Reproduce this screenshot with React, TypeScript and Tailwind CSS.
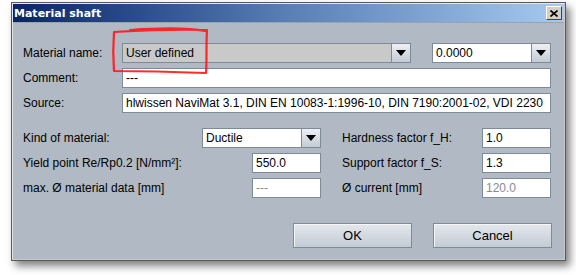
import React from "react";

const font = { fontFamily: '"Liberation Sans", Arial, sans-serif' };

function Arrow() {
  return (
    <div className="flex h-full w-[19px] shrink-0 items-center justify-center border-l border-[#7d8b99] bg-gradient-to-b from-[#eef0f3] to-[#c4cbd4]">
      <svg width="10" height="6" viewBox="0 0 10 6">
        <path d="M0 0 H10 L5 6 Z" fill="#000" />
      </svg>
    </div>
  );
}

function Combo({ value, className, grey }: { value: string; className: string; grey?: boolean }) {
  return (
    <div className={`flex h-[20px] border border-[#7d8b99] ${grey ? "bg-[#c9c9c9]" : "bg-white"} ${className}`}>
      <div className="flex-1 truncate pl-[3px] text-[12px] leading-[18px] text-black">{value}</div>
      <Arrow />
    </div>
  );
}

function Field({ value, className, dim }: { value: string; className: string; dim?: boolean }) {
  return (
    <div
      className={`h-[20px] overflow-hidden whitespace-nowrap border border-[#7d8b99] bg-white pl-[3px] text-[12px] leading-[18px] ${dim ? "text-[#8a8a8a]" : "text-black"} ${className}`}
    >
      {value}
    </div>
  );
}

function Label({ children, className = "" }: { children: React.ReactNode; className?: string }) {
  return <div className={`text-[12px] leading-[20px] text-black ${className}`}>{children}</div>;
}

export default function App() {
  return (
    <div className="relative h-[275px] w-[576px] overflow-hidden bg-white pl-[11px] pt-[2px]" style={font}>
      {/* window */}
      <div className="flex h-[259px] w-[555px] flex-col border border-[#5a5a5a] shadow-[4px_5px_8px_rgba(0,0,0,0.5)]">
        <div className="flex h-full flex-col border border-[#e4e4e4] border-b-[#c8c8c8] border-r-[#c8c8c8] bg-[#b1bac4]">
          {/* title bar */}
          <div className="flex h-[18px] items-center justify-between bg-gradient-to-r from-[#0a246a] via-[#5a7fb5] to-[#a6caf0] pl-[1px] pr-[2px]">
            <span
              className="text-[11px] font-bold leading-none text-white"
              style={{ fontFamily: '"DejaVu Sans", Verdana, sans-serif' }}
            >
              Material shaft
            </span>
            <div className="flex h-[14px] w-[16px] items-center justify-center border border-b-[#404040] border-l-white border-r-[#404040] border-t-white bg-[#d4d0c8]">
              <svg width="8" height="7" viewBox="0 0 8 7">
                <path d="M0.5 0.5 L7.5 6.5 M7.5 0.5 L0.5 6.5" stroke="#000" strokeWidth="1.6" />
              </svg>
            </div>
          </div>

          {/* body */}
          <div className="flex flex-1 flex-col border-t border-[#9aa4ae] pl-[10px] pr-[12px] pt-[20px]">
            <div className="flex flex-col gap-[5px]">
              <div className="flex items-center">
                <Label className="w-[99px]">Material name:</Label>
                <Combo value="User defined" grey className="w-[289px]" />
                <Combo value="0.0000" className="ml-[21px] w-[119px]" />
              </div>
              <div className="flex items-center">
                <Label className="w-[99px]">Comment:</Label>
                <Field value="---" className="w-[429px]" />
              </div>
              <div className="flex items-center">
                <Label className="w-[99px]">Source:</Label>
                <Field
                  value="hlwissen NaviMat 3.1, DIN EN 10083-1:1996-10, DIN 7190:2001-02, VDI 2230"
                  className="w-[429px]"
                />
              </div>
            </div>

            <div className="mt-[15px] flex gap-[21px]">
              <div className="flex w-[298px] flex-col gap-[5px]">
                <div className="flex items-center">
                  <Label className="w-[179px]">Kind of material:</Label>
                  <Combo value="Ductile" className="w-[119px]" />
                </div>
                <div className="flex items-center justify-between">
                  <Label>Yield point Re/Rp0.2 [N/mm²]:</Label>
                  <Field value="550.0" className="w-[69px]" />
                </div>
                <div className="flex items-center justify-between">
                  <Label>max. Ø material data [mm]</Label>
                  <Field value="---" dim className="w-[69px]" />
                </div>
              </div>
              <div className="flex w-[209px] flex-col gap-[5px]">
                <div className="flex items-center justify-between">
                  <Label>Hardness factor f_H:</Label>
                  <Field value="1.0" className="w-[69px]" />
                </div>
                <div className="flex items-center justify-between">
                  <Label>Support factor f_S:</Label>
                  <Field value="1.3" className="w-[69px]" />
                </div>
                <div className="flex items-center justify-between">
                  <Label>Ø current [mm]</Label>
                  <Field value="120.0" dim className="w-[69px]" />
                </div>
              </div>
            </div>

            <div className="mt-[25px] flex justify-end gap-[21px]">
              {["OK", "Cancel"].map((b) => (
                <button
                  key={b}
                  className="h-[25px] w-[119px] border border-[#7d8b99] bg-gradient-to-b from-[#e4e8ed] to-[#c3cbd4] text-[13px] text-black shadow-[inset_1px_1px_0_#f4f6f8]"
                >
                  {b}
                </button>
              ))}
            </div>
          </div>
        </div>
      </div>

      {/* red hand-drawn highlight */}
      <svg className="absolute left-0 top-0" width="576" height="275" viewBox="0 0 576 275">
        <path
          d="M114 32 C150 30 180 29 207 30 C206 45 207 60 206 73 C180 72 150 71 114 71 C113 58 113 45 114 32 M130 30 C160 28 190 28 205 31"
          fill="none"
          stroke="#ff1a1a"
          strokeWidth="2.2"
          strokeLinecap="round"
          strokeLinejoin="round"
          opacity="0.92"
        />
      </svg>
    </div>
  );
}
